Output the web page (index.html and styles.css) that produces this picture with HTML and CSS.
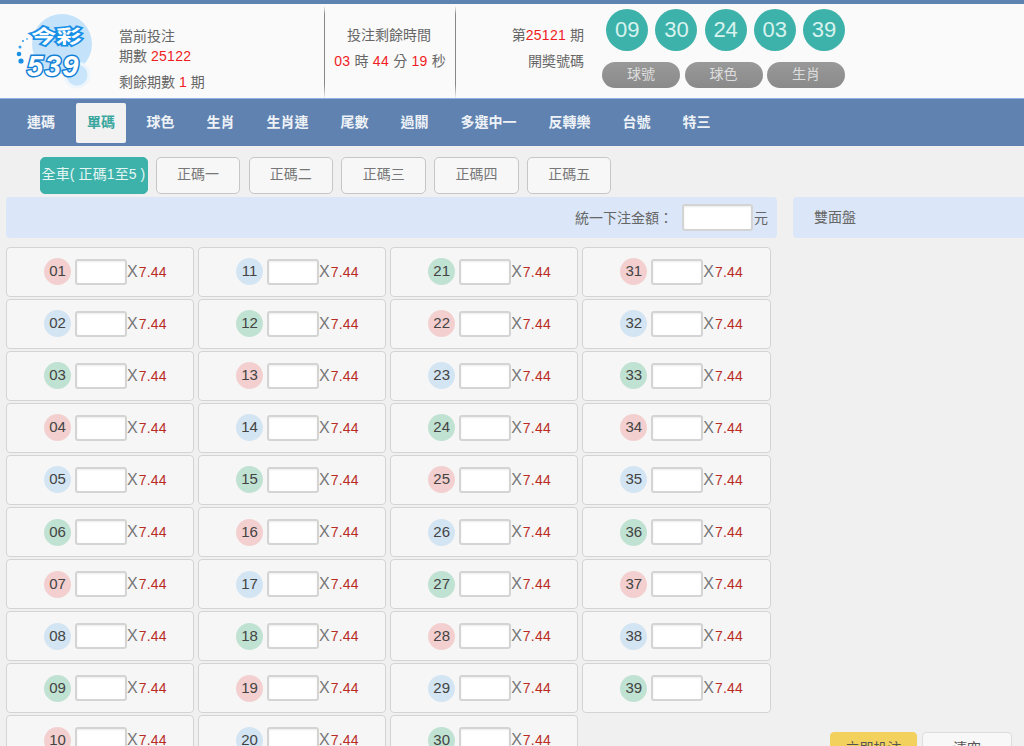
FILE: index.html
```html
<!DOCTYPE html>
<html lang="zh-Hant">
<head>
  <meta charset="UTF-8">
  <title>今彩539</title>
  <link rel="stylesheet" href="styles.css">
</head>
<body>

  <header class="top">
    <div class="brand">
      <svg class="logo" width="90" height="80" viewBox="0 0 90 80">
        <circle cx="57" cy="34" r="30" fill="#c4e3fb"/>
        <circle cx="72" cy="65" r="12" fill="#c9e5fb" stroke="#eef6fc" stroke-width="3"/>
        <circle cx="16" cy="51" r="2.6" fill="#1a8fe6"/>
        <circle cx="14" cy="44" r="2.3" fill="#1a8fe6"/>
        <circle cx="15" cy="37" r="1.5" fill="#3aa0ea"/>
        <circle cx="18" cy="31" r="1.1" fill="#3aa0ea"/>
        <circle cx="22" cy="29" r="1" fill="#6bb8f0"/>
        <text class="logo-cn" transform="translate(26 33) scale(1.15 .85)">今彩</text>
        <text class="logo-num" x="22" y="66">539</text>
      </svg>
      <div class="brand-info">
        <div>當前投注</div>
        <div>期數 <span class="red">25122</span></div>
        <div class="remain">剩餘期數 <span class="red">1</span> 期</div>
      </div>
    </div>
    <div class="countdown">
      <div class="countdown-title">投注剩餘時間</div>
      <div class="clock"><span class="red">03</span> 時 <span class="red">44</span> 分 <span class="red">19</span> 秒</div>
    </div>
    <div class="draw-info">
      <div>第<span class="red">25121</span> 期</div>
      <div class="draw-label">開奬號碼</div>
    </div>
    <div class="draw">
      <div class="draw-balls">
        <span>09</span><span>30</span><span>24</span><span>03</span><span>39</span>
      </div>
      <div class="draw-pills">
        <span>球號</span><span>球色</span><span>生肖</span>
      </div>
    </div>
  </header>

  <nav class="nav">
    <a>連碼</a>
    <a class="active">單碼</a>
    <a>球色</a>
    <a>生肖</a>
    <a>生肖連</a>
    <a>尾數</a>
    <a>過關</a>
    <a>多選中一</a>
    <a>反轉樂</a>
    <a>台號</a>
    <a>特三</a>
  </nav>

  <div class="tabs">
    <a class="tab tab-all">全車( 正碼1至5 )</a>
    <a class="tab">正碼一</a>
    <a class="tab">正碼二</a>
    <a class="tab">正碼三</a>
    <a class="tab">正碼四</a>
    <a class="tab">正碼五</a>
  </div>

  <div class="main">
    <div class="left">
      <div class="bar">
        <span class="bar-label">統一下注金額：</span>
        <input class="bar-input" type="text">
        <span>元</span>
      </div>
      <div class="grid">
        <div class="card"><span class="ball r">01</span><input type="text"><span class="x">X</span><span class="odds">7.44</span></div>
        <div class="card"><span class="ball b">11</span><input type="text"><span class="x">X</span><span class="odds">7.44</span></div>
        <div class="card"><span class="ball g">21</span><input type="text"><span class="x">X</span><span class="odds">7.44</span></div>
        <div class="card"><span class="ball r">31</span><input type="text"><span class="x">X</span><span class="odds">7.44</span></div>

        <div class="card"><span class="ball b">02</span><input type="text"><span class="x">X</span><span class="odds">7.44</span></div>
        <div class="card"><span class="ball g">12</span><input type="text"><span class="x">X</span><span class="odds">7.44</span></div>
        <div class="card"><span class="ball r">22</span><input type="text"><span class="x">X</span><span class="odds">7.44</span></div>
        <div class="card"><span class="ball b">32</span><input type="text"><span class="x">X</span><span class="odds">7.44</span></div>

        <div class="card"><span class="ball g">03</span><input type="text"><span class="x">X</span><span class="odds">7.44</span></div>
        <div class="card"><span class="ball r">13</span><input type="text"><span class="x">X</span><span class="odds">7.44</span></div>
        <div class="card"><span class="ball b">23</span><input type="text"><span class="x">X</span><span class="odds">7.44</span></div>
        <div class="card"><span class="ball g">33</span><input type="text"><span class="x">X</span><span class="odds">7.44</span></div>

        <div class="card"><span class="ball r">04</span><input type="text"><span class="x">X</span><span class="odds">7.44</span></div>
        <div class="card"><span class="ball b">14</span><input type="text"><span class="x">X</span><span class="odds">7.44</span></div>
        <div class="card"><span class="ball g">24</span><input type="text"><span class="x">X</span><span class="odds">7.44</span></div>
        <div class="card"><span class="ball r">34</span><input type="text"><span class="x">X</span><span class="odds">7.44</span></div>

        <div class="card"><span class="ball b">05</span><input type="text"><span class="x">X</span><span class="odds">7.44</span></div>
        <div class="card"><span class="ball g">15</span><input type="text"><span class="x">X</span><span class="odds">7.44</span></div>
        <div class="card"><span class="ball r">25</span><input type="text"><span class="x">X</span><span class="odds">7.44</span></div>
        <div class="card"><span class="ball b">35</span><input type="text"><span class="x">X</span><span class="odds">7.44</span></div>

        <div class="card"><span class="ball g">06</span><input type="text"><span class="x">X</span><span class="odds">7.44</span></div>
        <div class="card"><span class="ball r">16</span><input type="text"><span class="x">X</span><span class="odds">7.44</span></div>
        <div class="card"><span class="ball b">26</span><input type="text"><span class="x">X</span><span class="odds">7.44</span></div>
        <div class="card"><span class="ball g">36</span><input type="text"><span class="x">X</span><span class="odds">7.44</span></div>

        <div class="card"><span class="ball r">07</span><input type="text"><span class="x">X</span><span class="odds">7.44</span></div>
        <div class="card"><span class="ball b">17</span><input type="text"><span class="x">X</span><span class="odds">7.44</span></div>
        <div class="card"><span class="ball g">27</span><input type="text"><span class="x">X</span><span class="odds">7.44</span></div>
        <div class="card"><span class="ball r">37</span><input type="text"><span class="x">X</span><span class="odds">7.44</span></div>

        <div class="card"><span class="ball b">08</span><input type="text"><span class="x">X</span><span class="odds">7.44</span></div>
        <div class="card"><span class="ball g">18</span><input type="text"><span class="x">X</span><span class="odds">7.44</span></div>
        <div class="card"><span class="ball r">28</span><input type="text"><span class="x">X</span><span class="odds">7.44</span></div>
        <div class="card"><span class="ball b">38</span><input type="text"><span class="x">X</span><span class="odds">7.44</span></div>

        <div class="card"><span class="ball g">09</span><input type="text"><span class="x">X</span><span class="odds">7.44</span></div>
        <div class="card"><span class="ball r">19</span><input type="text"><span class="x">X</span><span class="odds">7.44</span></div>
        <div class="card"><span class="ball b">29</span><input type="text"><span class="x">X</span><span class="odds">7.44</span></div>
        <div class="card"><span class="ball g">39</span><input type="text"><span class="x">X</span><span class="odds">7.44</span></div>

        <div class="card"><span class="ball r">10</span><input type="text"><span class="x">X</span><span class="odds">7.44</span></div>
        <div class="card"><span class="ball b">20</span><input type="text"><span class="x">X</span><span class="odds">7.44</span></div>
        <div class="card"><span class="ball g">30</span><input type="text"><span class="x">X</span><span class="odds">7.44</span></div>
      </div>
    </div>
    <div class="right">
      <div class="panel">雙面盤</div>
      <div class="actions">
        <button class="btn btn-bet">立即投注</button>
        <button class="btn btn-clear">清空</button>
      </div>
    </div>
  </div>

</body>
</html>
```

FILE: styles.css
```css
html, body {
  height: 746px;
  overflow: hidden;
}
body {
  margin: 0;
  background: #f0f0f0;
  color: #666;
  font-family: "Liberation Sans", "Noto Sans CJK TC", sans-serif;
  font-size: 14px;
}
.red {
  color: #f01c24;
  letter-spacing: .3px;
}

.top {
  display: flex;
  height: 94px;
  border-top: 4px solid #5d83b1;
  background: #fafafa;
}
.brand {
  display: flex;
  width: 324px;
}
.logo {
  flex: none;
  margin: 6px 0 0 5px;
}
.logo-cn {
  font-size: 22px;
  font-weight: bold;
  fill: #fff;
  stroke: #1a8fe6;
  stroke-width: 4px;
  paint-order: stroke;
}
.logo-num {
  font-size: 29px;
  font-weight: bold;
  font-style: italic;
  letter-spacing: 1.5px;
  fill: #fff;
  stroke: #1480d6;
  stroke-width: 3px;
  paint-order: stroke;
}
.brand-info {
  margin: 22px 0 0 24px;
  line-height: 20px;
}
.remain {
  margin-top: 6px;
}
.countdown {
  width: 130px;
  margin-right: -1px;
  padding-top: 21px;
  border: solid;
  border-width: 0 1px;
  border-image: linear-gradient(transparent 3%, #888 12%, #888 85%, transparent) 1;
  text-align: center;
  line-height: 20px;
}
.countdown-title {
  margin-left: -2px;
}
.clock {
  margin: 6px -4px 0 -4px;
  word-spacing: .3px;
}
.draw-info {
  width: 129px;
  padding-top: 21px;
  text-align: right;
  line-height: 20px;
}
.draw-label {
  margin-top: 6px;
}
.draw {
  width: 243px;
  margin-left: 18px;
  padding-top: 5px;
}
.draw-balls {
  display: flex;
  justify-content: flex-end;
  gap: 7.2px;
}
.draw-balls span {
  width: 42px;
  height: 42px;
  border-radius: 50%;
  background: #3db2aa;
  color: #d8f3ef;
  font-size: 22px;
  line-height: 42px;
  text-align: center;
}
.draw-pills {
  display: flex;
  gap: 4.5px;
  margin-top: 11px;
}
.draw-pills span {
  width: 78px;
  height: 26px;
  border-radius: 13px;
  background: linear-gradient(#999, #8a8a8a);
  color: #ddd;
  line-height: 24px;
  text-align: center;
}

.nav {
  display: flex;
  gap: 10px;
  height: 47px;
  padding: 0 0 0 16px;
  border-top: 1px solid #8fb0e0;
  background: #5f82b0;
}
.nav a {
  margin-top: 4px;
  height: 40px;
  padding: 0 11px;
  border-radius: 2px;
  color: #eef2f7;
  font-weight: bold;
  line-height: 38px;
}
.nav .active {
  margin-right: -.6px;
  background: #f2f2f2;
  color: #3aa79f;
}

.tabs {
  display: flex;
  gap: 8.4px;
  height: 37px;
  margin: 11px 0 3px 39.5px;
}
.tab {
  box-sizing: border-box;
  width: 84.4px;
  border: 1px solid #c6c6c6;
  border-radius: 5px;
  background: #f7f7f7;
  color: #777;
  line-height: 33px;
  text-align: center;
}
.tab-all {
  width: 108px;
  border-color: #3db2aa;
  background: #3db2aa;
  color: #e4f6f4;
  white-space: nowrap;
  letter-spacing: .1px;
}

.main {
  display: flex;
  gap: 16px;
  padding-left: 6px;
}
.left {
  width: 771px;
}
.bar {
  box-sizing: border-box;
  display: flex;
  align-items: center;
  justify-content: flex-end;
  height: 41px;
  padding: 0 9px 2px 0;
  border-radius: 4px;
  background: #dbe7f8;
}
.bar-label {
  margin-right: 9px;
}
.bar-input {
  width: 71px;
  height: 27px;
  margin: 2px 1px 0 0;
}
input {
  box-sizing: border-box;
  border: 2px solid #d4d4d4;
  border-radius: 3px;
  background: #fff;
  box-shadow: inset 0 1px 2px rgba(0, 0, 0, .08);
  padding: 0;
}
.grid {
  display: grid;
  grid-template-columns: repeat(4, 188.3px);
  grid-auto-rows: 50px;
  column-gap: 3.8px;
  row-gap: 2.1px;
  margin-top: 8.6px;
}
.card {
  box-sizing: border-box;
  display: flex;
  align-items: center;
  height: 50px;
  padding-left: 38px;
  border: 1px solid #d4d4d4;
  border-radius: 4px;
  background: #f6f6f6;
}
.ball {
  flex: none;
  width: 27px;
  height: 27px;
  margin: 0 4px 0 -1px;
  border-radius: 50%;
  color: #444;
  font-size: 15px;
  line-height: 26px;
  text-align: center;
}
.r {
  background: #f3cfcf;
}
.b {
  background: #d3e4f3;
}
.g {
  background: #c0e2d2;
}
.card input {
  width: 52px;
  height: 26px;
}
.x {
  margin-right: 1px;
  color: #777;
  font-size: 16px;
}
.odds {
  color: #b92c26;
  font-size: 14px;
  letter-spacing: .2px;
}

.right {
  width: 231px;
}
.panel {
  height: 41px;
  padding-left: 21px;
  border-radius: 4px 0 0 4px;
  background: #dbe7f8;
  line-height: 40px;
}
.actions {
  display: flex;
  gap: 5px;
  margin-top: 494px;
  margin-left: 37px;
}
.btn {
  width: 87px;
  height: 36px;
  padding: 0 0 6px;
  border: 1px solid #ddd;
  border-radius: 4px;
  color: #555;
  font: 14px "Liberation Sans", "Noto Sans CJK TC", sans-serif;
}
.btn-bet {
  border-color: #f2d25c;
  background: #f2d25c;
}
.btn-clear {
  width: 90px;
  background: #f8f8f8;
}
```
